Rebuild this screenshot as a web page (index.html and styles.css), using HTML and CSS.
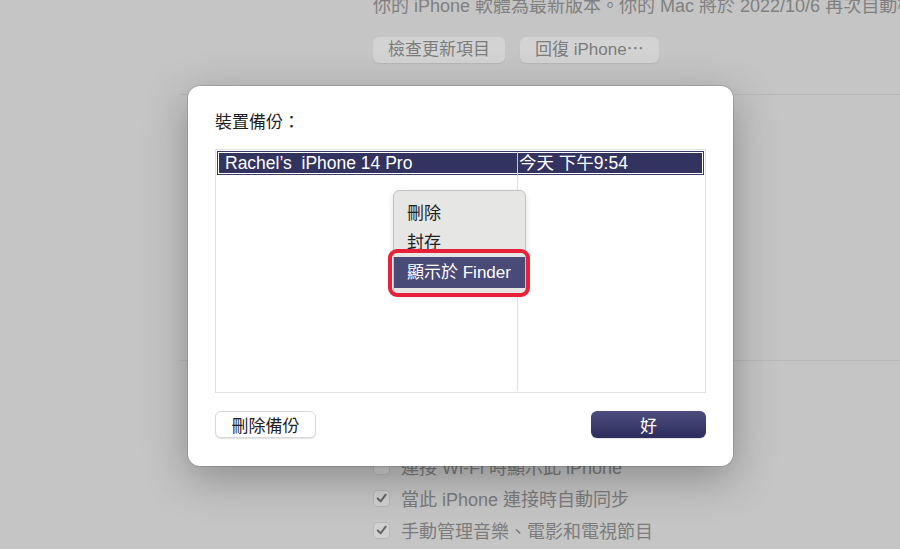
FILE: index.html
```html
<!DOCTYPE html>
<html lang="zh-Hant">
<head>
<meta charset="UTF-8">
<title>裝置備份</title>
<link rel="stylesheet" href="styles.css">
</head>
<body>
<div class="window">
  <div class="section">
    <p class="status">你的 iPhone 軟體為最新版本。你的 Mac 將於 2022/10/6 再次自動檢</p>
    <div class="bg-buttons">
      <span class="bg-btn">檢查更新項目</span>
      <span class="bg-btn">回復 iPhone⋯</span>
    </div>
  </div>
  <div class="divider"></div>
  <div class="spacer"></div>
  <div class="divider"></div>
  <ul class="options">
    <li><span class="check"></span>連接 Wi-Fi 時顯示此 iPhone</li>
    <li><span class="check"><svg viewBox="0 0 16 16" width="16" height="16"><path d="M4 8.5 L7 11.5 L12.5 4.5" /></svg></span>當此 iPhone 連接時自動同步</li>
    <li><span class="check"><svg viewBox="0 0 16 16" width="16" height="16"><path d="M4 8.5 L7 11.5 L12.5 4.5" /></svg></span>手動管理音樂、電影和電視節目</li>
  </ul>
</div>

<div class="dialog">
  <h3 class="dialog-title">裝置備份：</h3>
  <div class="backup-table">
    <div class="row selected">
      <div class="cell name">Rachel’s&nbsp; iPhone 14 Pro</div>
      <div class="cell date">今天 下午9:54</div>
    </div>
    <div class="filler"></div>
    <div class="filler col2"></div>

    <ul class="context-menu">
      <li>刪除</li>
      <li>封存</li>
      <li class="active">顯示於 Finder</li>
    </ul>
  </div>
  <div class="dialog-footer">
    <button class="btn">刪除備份</button>
    <button class="btn primary">好</button>
  </div>
</div>
</body>
</html>
```

FILE: styles.css
```css
body {
  margin: 0;
  width: 900px;
  height: 549px;
  overflow: hidden;
  position: relative;
  background-color: #c5c5c5;
  font-family: "Liberation Sans", "Noto Sans CJK TC", sans-serif;
}

/* фон — окно Finder позади диалога */
.window {
  margin-left: 180px;
  color: #7c7c7c;
  font-size: 18px;
}

.section {
  padding-left: 193px;
}

.status {
  margin: -6px 0 0;
  line-height: 24px;
  white-space: nowrap;
  color: #808080;
}

.bg-buttons {
  display: flex;
  gap: 15px;
  margin-top: 19px;
}

.bg-btn {
  height: 26px;
  line-height: 26px;
  padding: 0 15px;
  background-color: #d3d3d3;
  border-radius: 6px;
  box-shadow: 0 1px 1px rgba(0, 0, 0, 0.08);
  font-size: 17px;
}

.divider {
  height: 1px;
  background-color: #b9b9b9;
  margin-top: 31px;
}

.spacer {
  height: 234px;
}

.options {
  list-style: none;
  margin: 0;
  padding: 89px 0 0 193px;
}

.options li {
  display: flex;
  align-items: center;
  gap: 11px;
  height: 32px;
  white-space: nowrap;
}

.check {
  width: 17px;
  height: 17px;
  border-radius: 4px;
  background-color: #d0d0d0;
  border: 1px solid #b8b8b8;
  box-sizing: border-box;
  display: flex;
  align-items: center;
  justify-content: center;
}

.check svg {
  fill: none;
  stroke: #666;
  stroke-width: 2.2;
  stroke-linecap: round;
  stroke-linejoin: round;
}

/* диалог */
.dialog {
  position: absolute;
  left: 188px;
  top: 86px;
  width: 545px;
  height: 380px;
  box-sizing: border-box;
  padding: 24px 27px 28px;
  background-color: #fff;
  border-radius: 12px;
  box-shadow: 0 0 0 1px rgba(0, 0, 0, 0.12), 0 12px 45px rgba(0, 0, 0, 0.3);
  display: flex;
  flex-direction: column;
}

.dialog-title {
  margin: 0;
  font-size: 17px;
  font-weight: normal;
  line-height: 26px;
  color: #1f1f1f;
}

.backup-table {
  position: relative;
  margin-top: 13px;
  height: 244px;
  box-sizing: border-box;
  border: 1px solid #e2e2e2;
  padding: 1px;
  display: grid;
  grid-template-columns: 300px 1fr;
  grid-template-rows: 24px 1fr;
}

.row {
  grid-column: 1 / 3;
  display: grid;
  grid-template-columns: 299px 1fr;
}

.row.selected {
  background-color: #33335f;
  border: 1px solid #3b3b68;
  box-shadow: inset 0 0 0 1px #fff;
  color: #fff;
}

.cell {
  font-size: 17.5px;
  line-height: 23px;
  white-space: nowrap;
}

.name {
  padding-left: 7px;
}

.date {
  border-left: 1px solid #c9c9d6;
  padding-left: 1px;
}

.filler.col2 {
  border-left: 1px solid #e0e0e0;
}

.context-menu {
  position: absolute;
  left: 177px;
  top: 40px;
  width: 131px;
  margin: 0;
  padding: 8px 0 6px;
  list-style: none;
  background-color: #e6e6e5;
  border: 1px solid #c4c4c4;
  border-radius: 6px;
  box-shadow: 0 2px 6px rgba(0, 0, 0, 0.12);
}

.context-menu li {
  height: 29px;
  line-height: 29px;
  padding-left: 13px;
  font-size: 17px;
  color: #1f1f1f;
}

.context-menu li.active {
  position: relative;
  height: 31px;
  line-height: 31px;
  background-color: #4a4a78;
  color: #fff;
}

/* красная рамка-пометка */
.context-menu li.active::after {
  content: "";
  position: absolute;
  left: -6px;
  right: -5px;
  top: -8px;
  bottom: -9px;
  border: 4px solid #e8213b;
  border-radius: 9px;
}

.dialog-footer {
  display: flex;
  justify-content: space-between;
  margin-top: 18px;
}

.btn {
  height: 27px;
  width: 101px;
  padding: 0;
  font-family: inherit;
  font-size: 17px;
  color: #1f1f1f;
  background-color: #fff;
  border: 1px solid #dadada;
  border-radius: 6px;
  box-shadow: 0 1px 1px rgba(0, 0, 0, 0.12);
}

.btn.primary {
  width: 115px;
  color: #fff;
  border: none;
  background: linear-gradient(#4d4d7f, #2c2c5c);
}
```
